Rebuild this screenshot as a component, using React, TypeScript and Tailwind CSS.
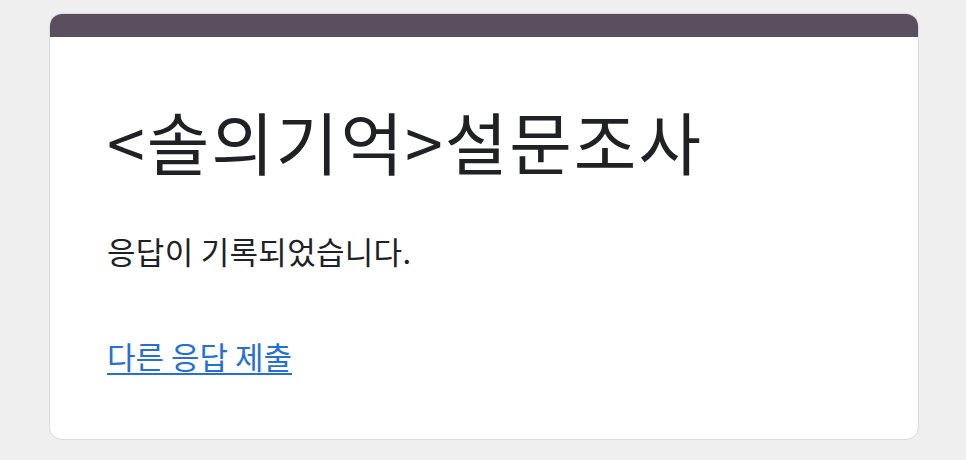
import React from 'react';

function App() {
  return (
    <div className="min-h-screen bg-[#efefef] pt-[13px] font-['Noto_Sans_CJK_KR','Noto_Sans',sans-serif] text-[#202124]">
      <div className="ml-[49px] h-[427px] w-[870px] overflow-hidden rounded-[13px] border border-[#dadce0] bg-white">
        <div className="h-[23px] bg-[#5a4f5e]" />
        <div className="flex flex-col pl-[57px] pt-[64px]">
          <h1 className="text-[68px] leading-[80px] tracking-[2px]">&lt;솔의기억&gt;설문조사</h1>
          <p className="mt-[50px] text-[31px] leading-[40px] tracking-[0.3px]">응답이 기록되었습니다.</p>
          <a href="#" className="mt-[65px] self-start text-[31px] leading-[40px] text-[#2570d6] underline decoration-2 underline-offset-[4px]">
            다른 응답 제출
          </a>
        </div>
      </div>
    </div>
  );
}

export default App;
